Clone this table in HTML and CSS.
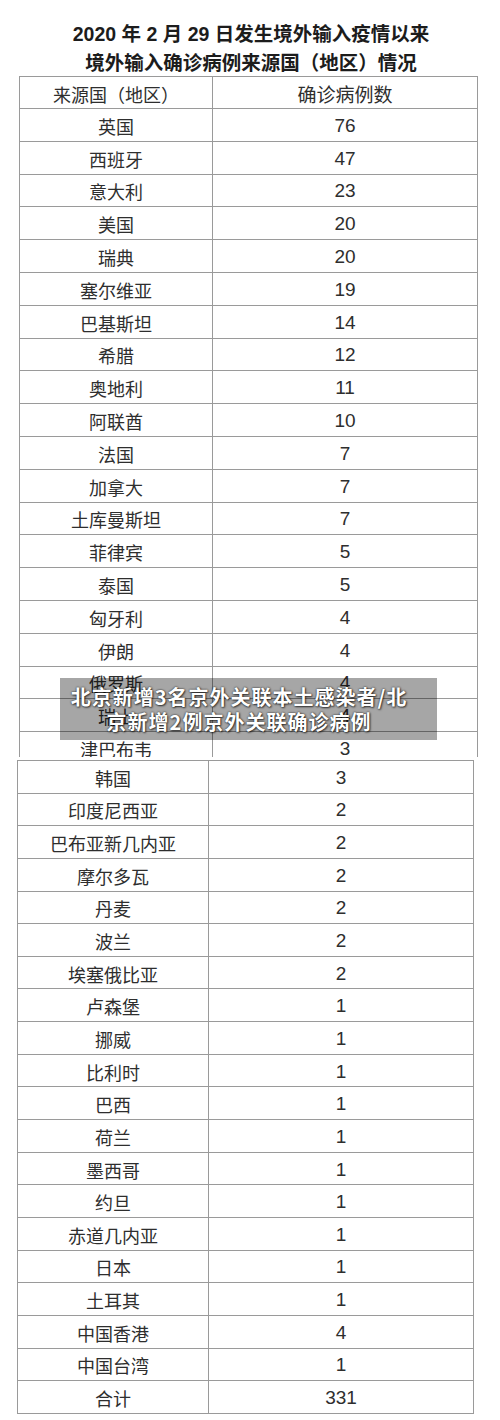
FILE: index.html
```html
<!DOCTYPE html>
<html lang="zh-CN">
<head>
<meta charset="utf-8">
<title>境外输入确诊病例来源国（地区）情况</title>
<link rel="stylesheet" href="styles.css">
</head>
<body>
<div class="page">
  <section class="sheet sheet1">
    <h1 class="title">
      <span class="tline">2020 年 2 月 29 日发生境外输入疫情以来</span>
      <span class="tline">境外输入确诊病例来源国（地区）情况</span>
    </h1>
    <div class="tbl t1">
      <div class="row head"><div class="c name">来源国（地区）</div><div class="c num hnum">确诊病例数</div></div>
      <div class="row"><div class="c name">英国</div><div class="c num">76</div></div>
      <div class="row"><div class="c name">西班牙</div><div class="c num">47</div></div>
      <div class="row"><div class="c name">意大利</div><div class="c num">23</div></div>
      <div class="row"><div class="c name">美国</div><div class="c num">20</div></div>
      <div class="row"><div class="c name">瑞典</div><div class="c num">20</div></div>
      <div class="row"><div class="c name">塞尔维亚</div><div class="c num">19</div></div>
      <div class="row"><div class="c name">巴基斯坦</div><div class="c num">14</div></div>
      <div class="row"><div class="c name">希腊</div><div class="c num">12</div></div>
      <div class="row"><div class="c name">奥地利</div><div class="c num">11</div></div>
      <div class="row"><div class="c name">阿联酋</div><div class="c num">10</div></div>
      <div class="row"><div class="c name">法国</div><div class="c num">7</div></div>
      <div class="row"><div class="c name">加拿大</div><div class="c num">7</div></div>
      <div class="row"><div class="c name">土库曼斯坦</div><div class="c num">7</div></div>
      <div class="row"><div class="c name">菲律宾</div><div class="c num">5</div></div>
      <div class="row"><div class="c name">泰国</div><div class="c num">5</div></div>
      <div class="row"><div class="c name">匈牙利</div><div class="c num">4</div></div>
      <div class="row"><div class="c name">伊朗</div><div class="c num">4</div></div>
      <div class="row"><div class="c name">俄罗斯</div><div class="c num">4</div></div>
      <div class="row"><div class="c name">瑞士</div><div class="c num">4</div></div>
      <div class="row"><div class="c name">津巴布韦</div><div class="c num">3</div></div>
    </div>
  </section>
  <section class="sheet sheet2">
    <div class="tbl t2">
      <div class="row"><div class="c name">韩国</div><div class="c num">3</div></div>
      <div class="row"><div class="c name">印度尼西亚</div><div class="c num">2</div></div>
      <div class="row"><div class="c name">巴布亚新几内亚</div><div class="c num">2</div></div>
      <div class="row"><div class="c name">摩尔多瓦</div><div class="c num">2</div></div>
      <div class="row"><div class="c name">丹麦</div><div class="c num">2</div></div>
      <div class="row"><div class="c name">波兰</div><div class="c num">2</div></div>
      <div class="row"><div class="c name">埃塞俄比亚</div><div class="c num">2</div></div>
      <div class="row"><div class="c name">卢森堡</div><div class="c num">1</div></div>
      <div class="row"><div class="c name">挪威</div><div class="c num">1</div></div>
      <div class="row"><div class="c name">比利时</div><div class="c num">1</div></div>
      <div class="row"><div class="c name">巴西</div><div class="c num">1</div></div>
      <div class="row"><div class="c name">荷兰</div><div class="c num">1</div></div>
      <div class="row"><div class="c name">墨西哥</div><div class="c num">1</div></div>
      <div class="row"><div class="c name">约旦</div><div class="c num">1</div></div>
      <div class="row"><div class="c name">赤道几内亚</div><div class="c num">1</div></div>
      <div class="row"><div class="c name">日本</div><div class="c num">1</div></div>
      <div class="row"><div class="c name">土耳其</div><div class="c num">1</div></div>
      <div class="row"><div class="c name">中国香港</div><div class="c num">4</div></div>
      <div class="row"><div class="c name">中国台湾</div><div class="c num">1</div></div>
      <div class="row"><div class="c name">合计</div><div class="c num">331</div></div>
    </div>
  </section>
  <div class="caption">北京新增3名京外关联本土感染者/北京新增2例京外关联确诊病例</div>
</div>
</body>
</html>
```
FILE: styles.css
```css
html, body {
  margin: 0;
  padding: 0;
  background: #ffffff;
}

.page {
  position: relative;
  width: 500px;
  height: 1420px;
  overflow: hidden;
  font-family: "Noto Sans CJK SC", "Noto Sans", sans-serif;
  color: #333333;
}

.sheet {
  background: #ffffff;
}

.sheet1 {
  height: 757px;
  overflow: hidden;
}

.title {
  margin: 0;
  padding-top: 20px;
  height: 56px;
  font-family: "Liberation Sans", "Noto Sans CJK SC", sans-serif;
  font-size: 19.5px;
  font-weight: 700;
  line-height: 28.5px;
  color: #1c1c1c;
  text-align: center;
}

.tline {
  display: block;
  margin-left: 2px;
}

.tbl {
  box-sizing: border-box;
  border-left: 1px solid #9a9a9a;
  border-right: 1px solid #9a9a9a;
  border-top: 1px solid #9a9a9a;
}

.t1 {
  margin-left: 19px;
  width: 459px;
}

.t1 .row {
  grid-template-columns: 193px 1fr;
  height: 32.8px;
}

.t1 .row.head {
  height: 32px;
}

.sheet2 {
  padding-top: 3px;
}

.t2 {
  margin-left: 17px;
  width: 457px;
}

.t2 .row {
  grid-template-columns: 191px 1fr;
  height: 32.65px;
}

.row {
  display: grid;
  box-sizing: border-box;
  border-bottom: 1px solid #9a9a9a;
}

.c {
  display: flex;
  align-items: center;
  justify-content: center;
  padding-top: 2px;
  box-sizing: border-box;
}

.name {
  border-right: 1px solid #9a9a9a;
  font-size: 18px;
  color: #2e2e2e;
}

.num {
  font-family: "Liberation Sans", "Noto Sans CJK SC", sans-serif;
  font-size: 19px;
  color: #2e2e2e;
}

.hnum {
  font-family: "Noto Sans CJK SC", sans-serif;
  font-size: 19px;
}

.caption {
  position: absolute;
  left: 60px;
  top: 678px;
  width: 377px;
  height: 62px;
  box-sizing: border-box;
  padding: 6px 23px 0 4px;
  background: rgba(0, 0, 0, 0.35);
  color: #ffffff;
  font-family: "Noto Sans CJK SC", sans-serif;
  font-size: 20px;
  font-weight: 700;
  letter-spacing: 1px;
  line-height: 25px;
  text-align: center;
  text-shadow: 0 0 2px rgba(0, 0, 0, 0.85), 1px 1px 2px rgba(0, 0, 0, 0.6);
}
```
